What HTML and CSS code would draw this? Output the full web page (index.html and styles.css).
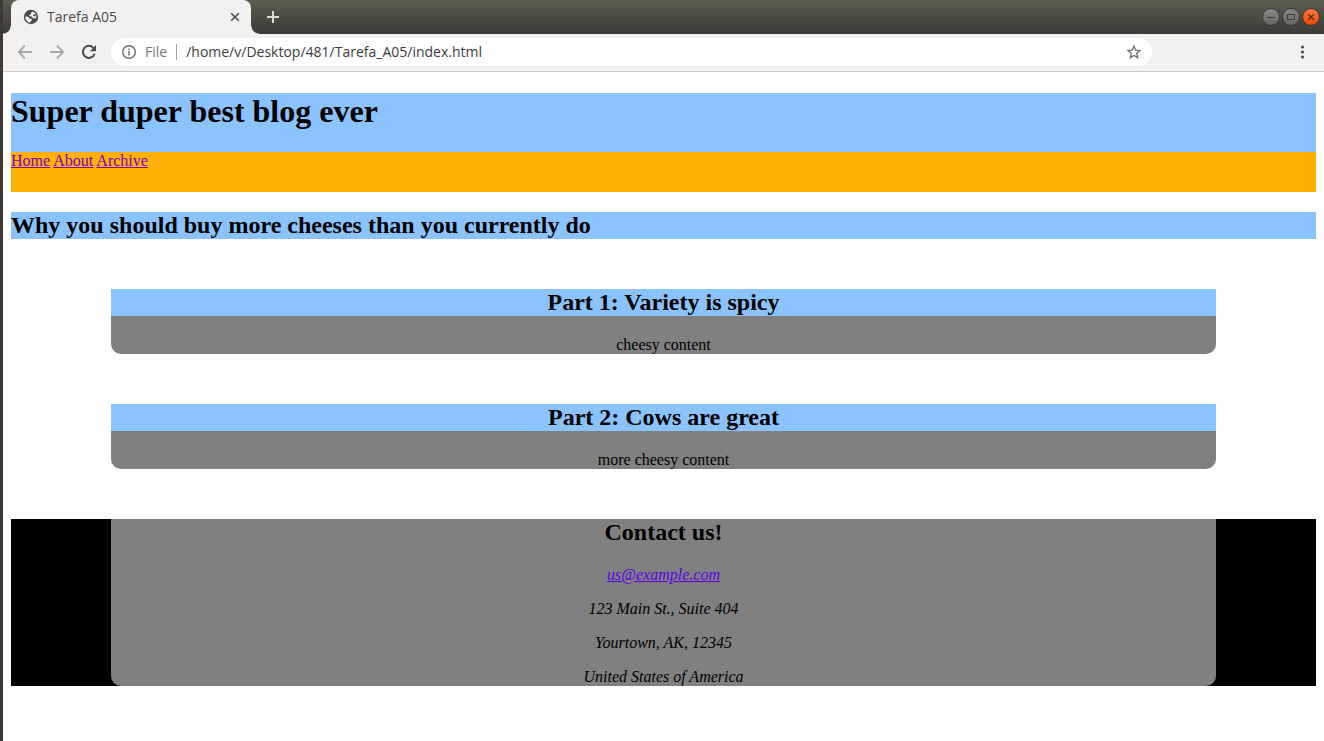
FILE: index.html
```
<!DOCTYPE html>
<html lang="en">
<head>
<meta charset="utf-8">
<title>Tarefa A05</title>
<link rel="stylesheet" href="styles.css">
</head>
<body>
<div class="window">
  <div class="tabstrip">
    <div class="tab">
      <svg class="favicon" viewBox="0 0 16 16"><circle cx="8" cy="8" r="7.2" fill="#4a4c4c"/><path d="M9.4 2.4 8 3.8 8.1 5.2 6.2 6 6.4 7.3 9 7.6 9.8 9.2 12 9.4 13.6 8.6C13.9 5.6 12.4 3.2 9.4 2.4ZM2.3 7.4C2.2 10.6 4.2 13.2 7.4 13.6L7.6 12.2 9 11 8.6 9.8 6.4 9.4 5.2 7.8Z" fill="#f2f1f0"/><path d="M11.2 5.2 10 6.2 11 7.4 13 7.2 12.6 5.2Z" fill="#4a4c4c"/></svg>
      <span class="tab-title">Tarefa A05</span>
      <button class="icon-button tab-close" aria-label="Close tab"><svg viewBox="0 0 16 16" width="16" height="16"><path d="M4.2 4.2l7.6 7.6M11.8 4.2l-7.6 7.6" stroke="#4a4c4c" stroke-width="1.6"/></svg></button>
    </div>
    <button class="icon-button new-tab" aria-label="New tab"><svg viewBox="0 0 16 16" width="16" height="16"><path d="M8 2v12M2 8h12" stroke="#dfdbd2" stroke-width="2"/></svg></button>
    <div class="controls">
      <button class="control" aria-label="Minimize"><svg viewBox="0 0 16 16"><path d="M4 8.5h8" stroke="#3c3b37"/></svg></button>
      <button class="control" aria-label="Maximize"><svg viewBox="0 0 16 16"><path d="M4.5 5.5h7v5h-7z" fill="none" stroke="#3c3b37"/></svg></button>
      <button class="control control-close" aria-label="Close"><svg viewBox="0 0 16 16"><path d="M5.2 5.4l5.6 5.4M10.8 5.4l-5.6 5.4" stroke="#4a2a14" stroke-width="1.2"/></svg></button>
    </div>
  </div>
  <div class="toolbar">
    <button class="icon-button" aria-label="Back"><svg viewBox="0 0 16 16" width="16" height="16"><path d="M15 8H2M8 1.7 1.7 8 8 14.3" fill="none" stroke="#a9a8a7" stroke-width="1.8"/></svg></button>
    <button class="icon-button" aria-label="Forward"><svg viewBox="0 0 16 16" width="16" height="16"><path d="M1 8h13M8 1.7 14.3 8 8 14.3" fill="none" stroke="#a9a8a7" stroke-width="1.8"/></svg></button>
    <button class="icon-button" aria-label="Reload"><svg viewBox="0 0 16 16" width="16" height="16"><path d="M13.6 9.7A6 6 0 1 1 12.4 3.9" fill="none" stroke="#4a4c4c" stroke-width="2"/><path d="M15 1v6.2H8.8z" fill="#4a4c4c"/></svg></button>
    <div class="omnibox">
      <svg class="info" viewBox="0 0 16 16"><circle cx="8" cy="8" r="6.3" fill="none" stroke="#6b6b6b" stroke-width="1.4"/><path d="M8 7v4.4M8 4.4v1.5" stroke="#6b6b6b" stroke-width="1.5"/></svg>
      <span class="scheme">File</span>
      <input class="url" type="text" aria-label="Address" value="/home/v/Desktop/481/Tarefa_A05/index.html">
      <button class="icon-button" aria-label="Bookmark this page"><svg viewBox="0 0 16 16" width="16" height="16"><path d="M8 2.2l1.7 4 4.3.4-3.3 2.8 1 4.2L8 11.4l-3.7 2.2 1-4.2L2 6.6l4.3-.4z" fill="none" stroke="#6b6b6b" stroke-width="1.3"/></svg></button>
    </div>
    <button class="icon-button menu" aria-label="Menu"><svg viewBox="0 0 16 16" width="16" height="16" fill="#4a4c4c"><circle cx="8.5" cy="3" r="1.6"/><circle cx="8.5" cy="8" r="1.6"/><circle cx="8.5" cy="13" r="1.6"/></svg></button>
  </div>
  <div class="page">
    <header class="banner">
      <h1 class="site-title">Super duper best blog ever</h1>
      <nav class="nav"><a href="#home">Home</a> <a href="#about">About</a> <a href="#archive">Archive</a></nav>
    </header>
    <h2 class="heading">Why you should buy more cheeses than you currently do</h2>
    <section class="card">
      <h2 class="heading">Part 1: Variety is spicy</h2>
      <p>cheesy content</p>
    </section>
    <section class="card">
      <h2 class="heading">Part 2: Cows are great</h2>
      <p>more cheesy content</p>
    </section>
    <footer class="footer">
      <address class="card contact">
        <h2 class="contact-title">Contact us!</h2>
        <p><a href="mailto:us@example.com">us@example.com</a></p>
        <p>123 Main St., Suite 404</p>
        <p>Yourtown, AK, 12345</p>
        <p>United States of America</p>
      </address>
    </footer>
  </div>
</div>
</body>
</html>
```
FILE: styles.css
```
* { box-sizing: border-box; }
body {
  margin: 0;
  background: #fff;
  font: 16px/18px "Liberation Serif", "Times New Roman", serif;
  color: #000;
}
.window {
  min-height: 100vh;
  border-left: 3px solid #3e3932;
}
.tabstrip {
  display: flex;
  align-items: center;
  height: 34px;
  padding-left: 8px;
  padding-right: 4px;
  background: linear-gradient(#5b5d4e, #3c3b37);
  font: 14px/20px "Open Sans", "Noto Sans", sans-serif;
}
.tab {
  position: relative;
  display: flex;
  align-items: center;
  width: 240px;
  height: 34px;
  padding: 0 8px 0 12px;
  border-radius: 8px 8px 0 0;
  background: #f2f1f0;
  color: #4a4c4c;
}
.tab::before,
.tab::after {
  content: "";
  position: absolute;
  bottom: 0;
  width: 8px;
  height: 8px;
}
.tab::before {
  right: 100%;
  background: radial-gradient(circle at 0 0, transparent 7px, #f2f1f0 8px);
}
.tab::after {
  left: 100%;
  background: radial-gradient(circle at 100% 0, transparent 7px, #f2f1f0 8px);
}
.favicon { width: 16px; height: 16px; margin-right: 8px; }
.tab-title { flex: 1; }
.icon-button {
  display: flex;
  padding: 0;
  border: 0;
  background: none;
}
.new-tab { margin-left: 14px; }
.controls { display: flex; gap: 2px; margin-left: auto; }
.control {
  width: 18px;
  height: 18px;
  padding: 0;
  border: 1px solid #393832;
  border-radius: 50%;
  background: linear-gradient(#8b8a84, #66655f);
}
.control svg { display: block; width: 16px; height: 16px; }
.control-close { background: linear-gradient(#fb7440, #ea4c00); }
.toolbar {
  display: flex;
  align-items: center;
  gap: 16px;
  height: 38px;
  padding: 0 14px 1px;
  border-bottom: 1px solid #cdcccb;
  background: #f2f1f0;
  font: 14px/20px "Open Sans", "Noto Sans", sans-serif;
}
.omnibox {
  display: flex;
  align-items: center;
  flex: 1;
  height: 28px;
  margin-right: 126px;
  margin-left: -2px;
  padding: 0 10px;
  border-radius: 14px;
  background: #fff;
}
.info { width: 16px; height: 16px; }
.scheme {
  margin: 0 9px 0 8px;
  padding-right: 9px;
  border-right: 1px solid #a0a0a0;
  line-height: 16px;
  color: #7a7775;
}
.url {
  flex: 1;
  min-width: 0;
  padding: 0;
  border: 0;
  background: none;
  font: inherit;
  color: #3c3c3c;
}
.page { padding: 21px 8px 55px; }
.site-title {
  margin: 0;
  padding-bottom: 22px;
  background: #8bc3ff;
  font-size: 32px;
  line-height: 37px;
}
.nav { height: 40px; background: #ffb000; }
.nav a { color: #7a00cc; }
.heading {
  margin: 20px 0;
  background: #8bc3ff;
  font-size: 24px;
  line-height: 27px;
}
.card {
  margin: 50px 100px;
  border-radius: 10px;
  border-top-left-radius: 0;
  border-top-right-radius: 0;
  background: #808080;
  text-align: center;
}
.card .heading { margin: 0; }
.card p { margin: 0; padding-top: 20px; }
.footer { background: #000; }
.contact { margin: 0 100px; }
.contact-title {
  margin: 0;
  padding-bottom: 4px;
  font-size: 24px;
  font-style: normal;
  line-height: 27px;
}
.contact p { padding-top: 16px; }
.contact a { color: #5a00e6; }
```
